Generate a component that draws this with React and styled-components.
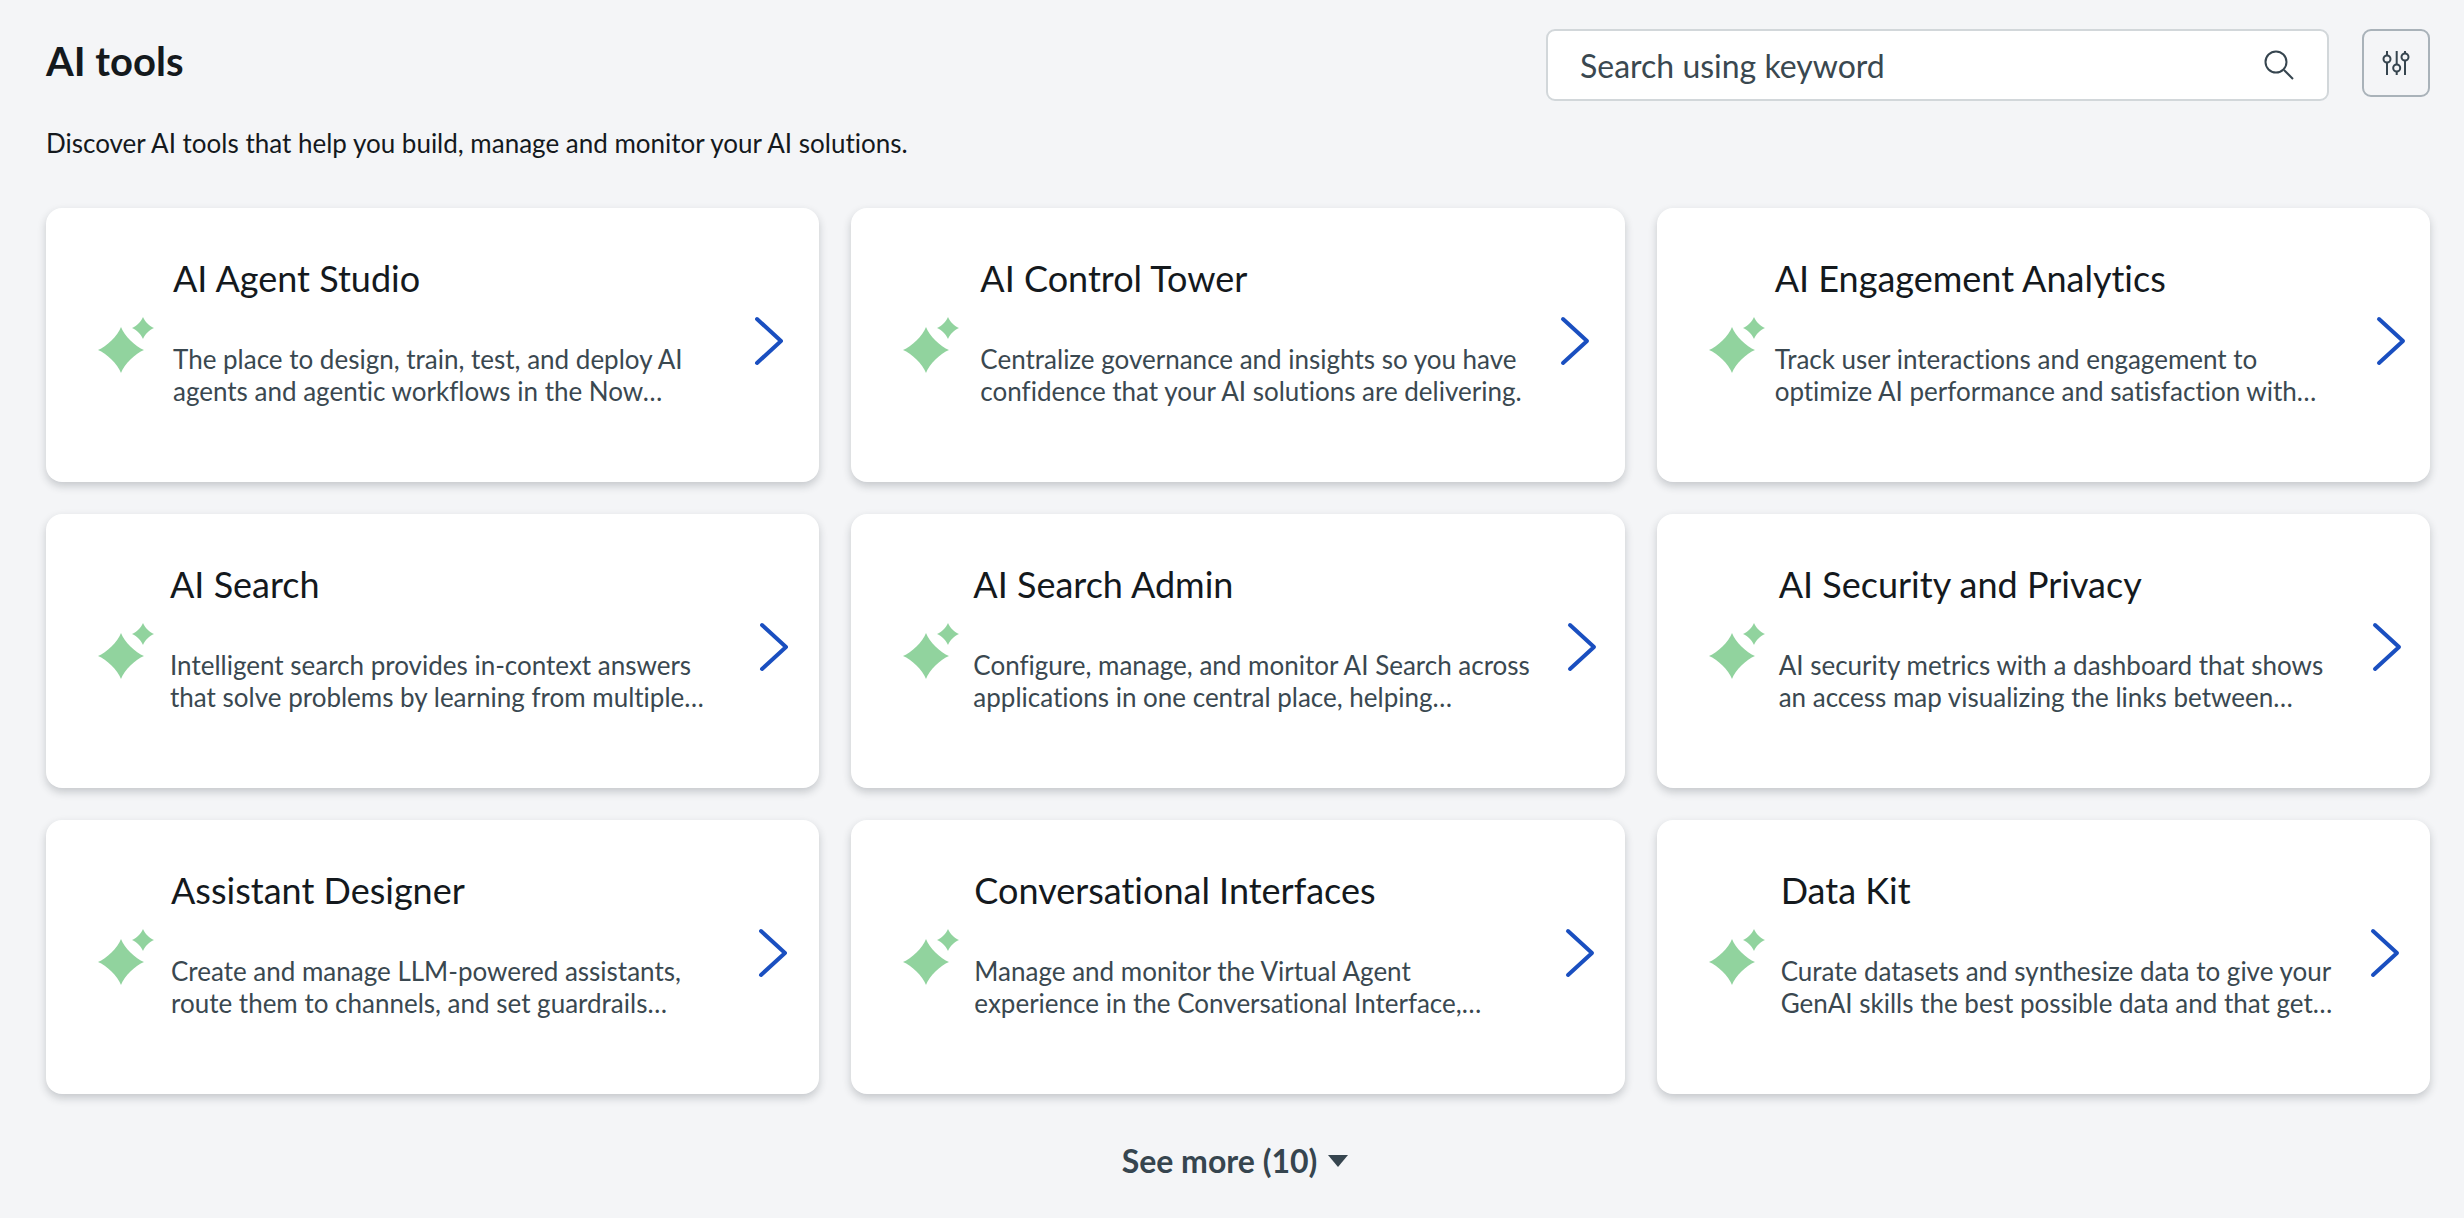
import React from "react";
import styled, { createGlobalStyle } from "styled-components";

const Global = createGlobalStyle`
  html, body { margin: 0; padding: 0; background: #f4f5f7; }
  * { box-sizing: border-box; }
  body { font-family: Lato, "Noto Sans", sans-serif; font-variant-ligatures: none; overflow: hidden; }
`;

const Page = styled.main`
  width: 2464px;
  height: 1218px;
  padding: 29px 34px 0 46px;
  background: #f4f5f7;
  display: flex;
  flex-direction: column;
`;
const Header = styled.header`
  display: flex;
  justify-content: space-between;
  align-items: flex-start;
  height: 71px;
`;
const Title = styled.h1`
  margin: 0;
  padding-top: 9px;
  font-size: 40px;
  line-height: 46px;
  font-weight: 700;
  color: #14191d;
`;
const Tools = styled.div`
  display: flex;
  gap: 33px;
`;
const SearchBox = styled.div`
  width: 783px;
  height: 72px;
  background: #fff;
  border: 2px solid #d2d7da;
  border-radius: 9px;
  display: flex;
  align-items: center;
  justify-content: space-between;
  padding: 0 32px;
  font-size: 32px;
  color: #3a4850;
`;
const FilterButton = styled.button`
  width: 68px;
  height: 68px;
  padding: 0;
  background: #f4f5f7;
  border: 2px solid #a9b2b9;
  border-radius: 9px;
  display: flex;
  align-items: center;
  justify-content: center;
`;
const Subtitle = styled.p`
  margin: 26px 0 48px;
  font-size: 26px;
  line-height: 34px;
  color: #14191d;
`;
const Grid = styled.section`
  display: grid;
  grid-template-columns: repeat(3, 1fr);
  grid-auto-rows: 274px;
  column-gap: 32px;
  row-gap: 32px;
`;
const Card = styled.article`
  background: #fff;
  border-radius: 16px;
  box-shadow: 0 4px 9px rgba(30, 40, 50, 0.22);
  display: flex;
  align-items: center;
  padding: 0 ${p => p.$arrowRight}px 0 51px;
`;
const Spark = styled.svg`
  flex: none;
  width: 58px;
  height: 58px;
  margin-top: -2px;
`;
const Body = styled.div`
  flex: 1;
  min-width: 0;
  margin-left: ${p => p.$textLeft - 109}px;
  align-self: flex-start;
  margin-top: 45px;
`;
const CardTitle = styled.h2`
  margin: 0 0 40px;
  font-size: 36px;
  line-height: 50px;
  font-weight: 400;
  color: #14191d;
  white-space: nowrap;
`;
const Line = styled.span`
  display: block;
  font-size: 26px;
  line-height: 32px;
  color: #3a4850;
  white-space: nowrap;
`;
const Chevron = styled.svg`
  flex: none;
  width: 30px;
  height: 50px;
  margin-top: -8px;
`;
const More = styled.button`
  align-self: center;
  margin: 47px 6px 0 0;
  padding: 0;
  background: none;
  border: 0;
  display: flex;
  align-items: center;
  gap: 11px;
  font: 700 32px/40px Lato, "Noto Sans", sans-serif;
  color: #36454f;
`;

const tools = [
  { t: "AI Agent Studio", l: ["The place to design, train, test, and deploy AI", "agents and agentic workflows in the Now…"], x: 127, r: 35 },
  { t: "AI Control Tower", l: ["Centralize governance and insights so you have", "confidence that your AI solutions are delivering."], x: 129, r: 35 },
  { t: "AI Engagement Analytics", l: ["Track user interactions and engagement to", "optimize AI performance and satisfaction with…"], x: 118, r: 24 },
  { t: "AI Search", l: ["Intelligent search provides in-context answers", "that solve problems by learning from multiple…"], x: 124, r: 30 },
  { t: "AI Search Admin", l: ["Configure, manage, and monitor AI Search across", "applications in one central place, helping…"], x: 122, r: 28 },
  { t: "AI Security and Privacy", l: ["AI security metrics with a dashboard that shows", "an access map visualizing the links between…"], x: 122, r: 28 },
  { t: "Assistant Designer", l: ["Create and manage LLM-powered assistants,", "route them to channels, and set guardrails…"], x: 125, r: 31 },
  { t: "Conversational Interfaces", l: ["Manage and monitor the Virtual Agent", "experience in the Conversational Interface,…"], x: 123, r: 30 },
  { t: "Data Kit", l: ["Curate datasets and synthesize data to give your", "GenAI skills the best possible data and that get…"], x: 124, r: 30 },
];

const Sparkle = () => (
  <Spark viewBox="0 0 58 58" aria-hidden="true">
    <path fill="#91d39e" d="M24 12 C27 20.4 38.6 32 47 35 C38.6 38 27 49.6 24 58 C21 49.6 9.4 38 1 35 C9.4 32 21 20.4 24 12Z" />
    <path fill="#91d39e" d="M46 2 C47.5 6.2 52.8 11.5 57 13 C52.8 14.5 47.5 19.8 46 24 C44.5 19.8 39.2 14.5 35 13 C39.2 11.5 44.5 6.2 46 2Z" />
  </Spark>
);

export default function App() {
  return (
    <Page>
      <Global />
      <Header>
        <Title>AI tools</Title>
        <Tools>
          <SearchBox>
            <span>Search using keyword</span>
            <svg width="32" height="32" viewBox="0 0 32 32" fill="none" stroke="#36454f" strokeWidth="2">
              <circle cx="13" cy="13" r="10.5" />
              <path d="M21 21 L30 30" />
            </svg>
          </SearchBox>
          <FilterButton aria-label="Filter">
            <svg width="30" height="28" viewBox="0 0 30 28" fill="none" stroke="#36454f" strokeWidth="2">
              <path d="M6 2v4.5M6 13.5V26M15.7 2v13.5M15.7 22.5V26M24 2v2.5M24 11.5V26" />
              <circle cx="6" cy="10" r="3.5" />
              <circle cx="15.7" cy="19" r="3.5" />
              <circle cx="24" cy="8" r="3.5" />
            </svg>
          </FilterButton>
        </Tools>
      </Header>
      <Subtitle>Discover AI tools that help you build, manage and monitor your AI solutions.</Subtitle>
      <Grid>
        {tools.map(c => (
          <Card key={c.t} $arrowRight={c.r}>
            <Sparkle />
            <Body $textLeft={c.x}>
              <CardTitle>{c.t}</CardTitle>
              {c.l.map(s => <Line key={s}>{s}</Line>)}
            </Body>
            <Chevron viewBox="0 0 30 50" fill="none" stroke="#1a4fc0" strokeWidth="4" strokeLinecap="round" strokeLinejoin="round">
              <path d="M3 3 L27 25 L3 47" />
            </Chevron>
          </Card>
        ))}
      </Grid>
      <More>
        See more (10)
        <svg width="20" height="12" viewBox="0 0 20 12"><path fill="#36454f" d="M0 0h20L10 12z" /></svg>
      </More>
    </Page>
  );
}
